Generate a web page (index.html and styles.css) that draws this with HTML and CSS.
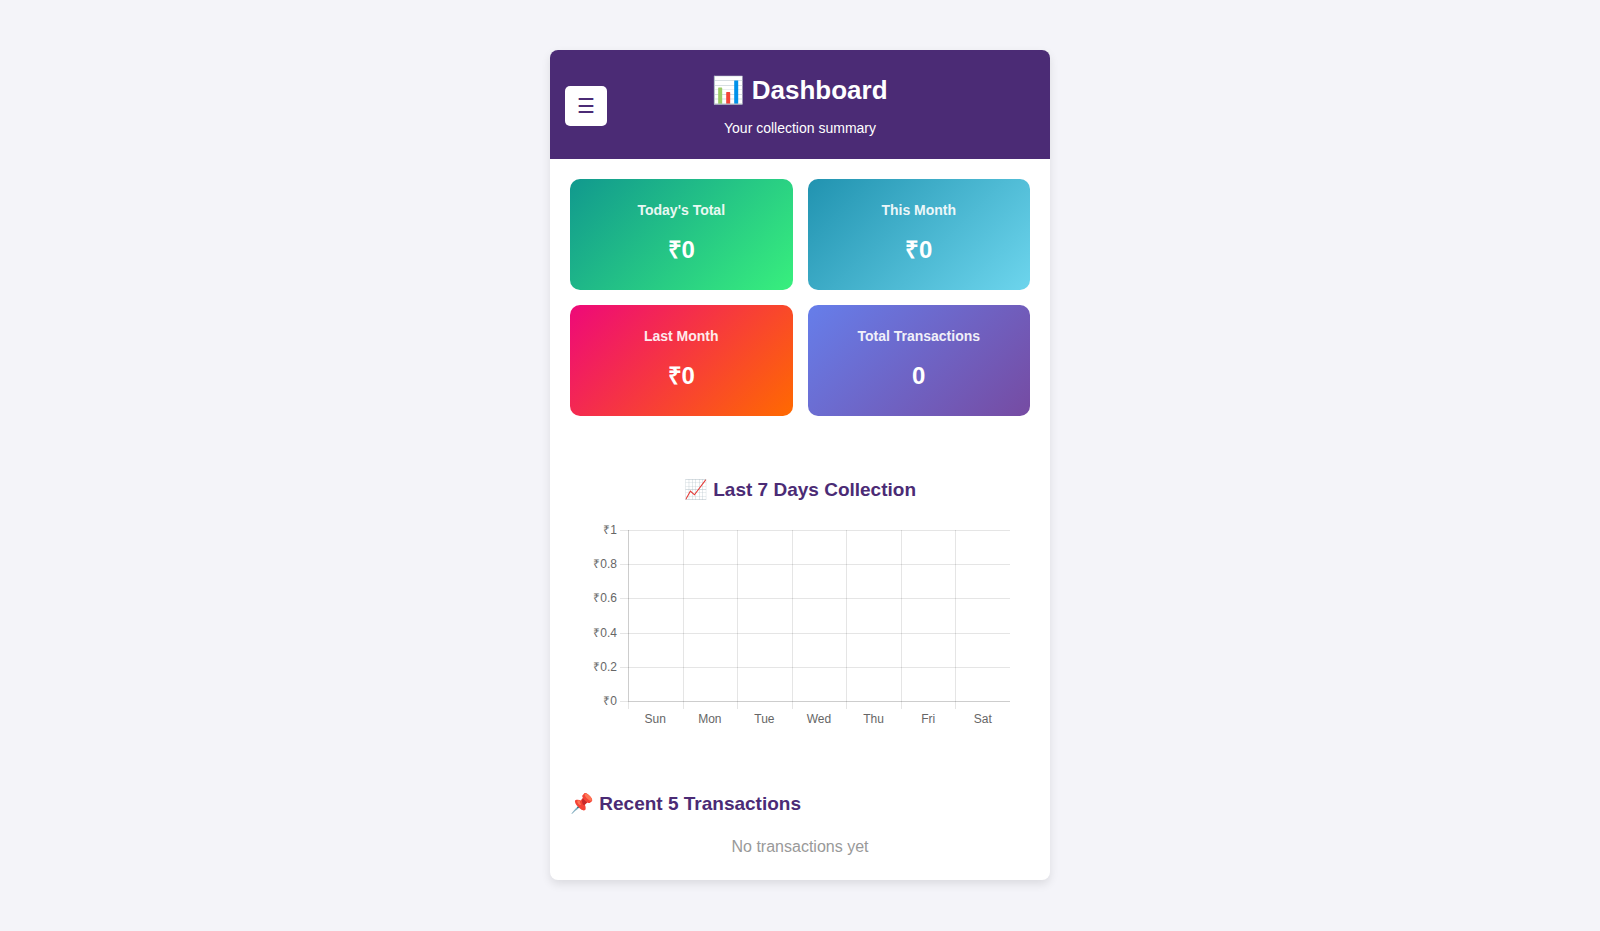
FILE: index.html
```html
<!DOCTYPE html>
<html lang="en">
<head>
    <meta charset="UTF-8">
    <meta name="viewport" content="width=device-width, initial-scale=1.0">
    <title>Dashboard</title>
    <link rel="stylesheet" href="styles.css">
</head>
<body>
    <div class="container">
        <header class="header">
            <button type="button" class="menu-btn" aria-label="Menu">☰</button>
            <div class="header-text">
                <h1>📊 Dashboard</h1>
                <p>Your collection summary</p>
            </div>
        </header>

        <main>
            <section class="cards">
                <div class="card today">
                    <h2>Today's Total</h2>
                    <p>₹0</p>
                </div>
                <div class="card month">
                    <h2>This Month</h2>
                    <p>₹0</p>
                </div>
                <div class="card last-month">
                    <h2>Last Month</h2>
                    <p>₹0</p>
                </div>
                <div class="card total">
                    <h2>Total Transactions</h2>
                    <p>0</p>
                </div>
            </section>

            <section class="chart-box">
                <h3>📈 Last 7 Days Collection</h3>
                <div class="chart">
                    <div class="y-labels">
                        <span>₹1</span>
                        <span>₹0.8</span>
                        <span>₹0.6</span>
                        <span>₹0.4</span>
                        <span>₹0.2</span>
                        <span>₹0</span>
                    </div>
                    <svg class="grid-lines" aria-hidden="true">
                        <!-- horizontal lines -->
                        <rect x="-8" y="0" width="8" height="1"/>
                        <rect x="-8" y="34" width="8" height="1"/>
                        <rect x="-8" y="68" width="8" height="1"/>
                        <rect x="-8" y="103" width="8" height="1"/>
                        <rect x="-8" y="137" width="8" height="1"/>
                        <rect x="-8" y="171" width="8" height="1"/>
                        <rect x="0" y="0" width="100%" height="1"/>
                        <rect x="0" y="34" width="100%" height="1"/>
                        <rect x="0" y="68" width="100%" height="1"/>
                        <rect x="0" y="103" width="100%" height="1"/>
                        <rect x="0" y="137" width="100%" height="1"/>
                        <rect x="0" y="171" width="100%" height="1"/>
                        <!-- vertical lines -->
                        <rect x="0" y="0" width="1" height="179"/>
                        <rect x="14.28%" y="0" width="1" height="179"/>
                        <rect x="28.57%" y="0" width="1" height="179"/>
                        <rect x="42.86%" y="0" width="1" height="179"/>
                        <rect x="57.14%" y="0" width="1" height="179"/>
                        <rect x="71.43%" y="0" width="1" height="179"/>
                        <rect x="85.71%" y="0" width="1" height="179"/>
                        <!-- axes -->
                        <rect x="0" y="0" width="1" height="171"/>
                        <rect x="0" y="171" width="100%" height="1"/>
                    </svg>
                    <div class="x-labels">
                        <span>Sun</span>
                        <span>Mon</span>
                        <span>Tue</span>
                        <span>Wed</span>
                        <span>Thu</span>
                        <span>Fri</span>
                        <span>Sat</span>
                    </div>
                </div>
            </section>

            <section class="recent">
                <h3>📌 Recent 5 Transactions</h3>
                <p>No transactions yet</p>
            </section>
        </main>
    </div>
</body>
</html>
```
FILE: styles.css
```css
* {
  box-sizing: border-box;
  margin: 0;
  padding: 0;
}

body {
  background: #f4f4f9;
  font-family: Arial, "Liberation Sans", sans-serif;
  padding: 50px 20px;
}

.container {
  max-width: 500px;
  margin: 0 auto;
  background: #fff;
  border-radius: 8px;
  box-shadow: 0 4px 10px rgba(0, 0, 0, 0.1);
  overflow: hidden;
}

/* Header */
.header {
  display: grid;
  grid-template-columns: 42px 1fr 42px;
  align-items: center;
  background: #4b2b75;
  color: #fff;
  padding: 25px 15px 23px;
}

.menu-btn {
  height: 40px;
  border: none;
  border-radius: 5px;
  background: #fff;
  color: #4b2b75;
  font-family: inherit;
  font-size: 20px;
  cursor: pointer;
}

.header-text {
  text-align: center;
}

.header h1 {
  font-size: 26px;
  line-height: 30px;
  margin-bottom: 15px;
}

.header p {
  font-size: 14px;
  line-height: 16px;
}

/* Summary cards */
.cards {
  display: grid;
  grid-template-columns: 1fr 1fr;
  gap: 15px;
  padding: 20px;
}

.card {
  padding: 23px 20px 26px;
  border-radius: 10px;
  color: #fff;
  text-align: center;
}

.card h2 {
  font-size: 14px;
  line-height: 16px;
  margin-bottom: 18px;
  opacity: 0.9;
}

.card p {
  font-size: 24px;
  font-weight: bold;
  line-height: 28px;
}

.today {
  background: linear-gradient(135deg, #11998e, #38ef7d);
}

.month {
  background: linear-gradient(135deg, #2193b0, #6dd5ed);
}

.last-month {
  background: linear-gradient(135deg, #ee0979, #ff6a00);
}

.total {
  background: linear-gradient(135deg, #667eea, #764ba2);
}

h3 {
  color: #4b2b75;
  font-size: 19px;
  line-height: 22px;
}

/* Chart */
.chart-box {
  padding: 43px 40px 40px;
}

.chart-box h3 {
  text-align: center;
  margin-bottom: 22px;
}

.chart {
  display: grid;
  grid-template-columns: 27px 1fr;
  column-gap: 11px;
  color: #666;
  font-size: 12px;
  line-height: 14px;
}

.y-labels {
  display: flex;
  flex-direction: column;
  justify-content: space-between;
  height: 185px;
  text-align: right;
}

.grid-lines {
  width: 100%;
  height: 179px;
  margin-top: 7px;
  overflow: visible;
  fill: rgba(0, 0, 0, 0.1);
  shape-rendering: crispEdges;
}

.x-labels {
  grid-column: 2;
  display: grid;
  grid-template-columns: repeat(7, 1fr);
  margin-top: 3px;
  text-align: center;
}

/* Recent transactions */
.recent {
  padding: 27px 20px 24px;
}

.recent h3 {
  margin-bottom: 23px;
}

.recent p {
  color: #999;
  font-size: 16px;
  line-height: 18px;
  text-align: center;
}
```
